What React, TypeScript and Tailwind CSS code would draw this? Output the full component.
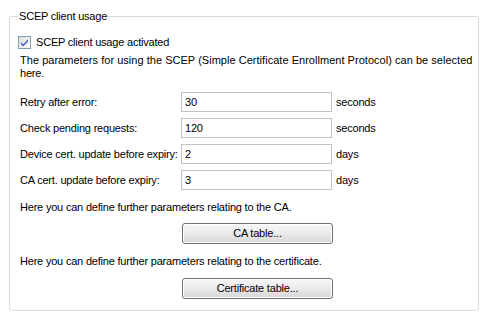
import React from 'react';

const font = { fontFamily: '"Liberation Sans", Arial, sans-serif' };

interface FieldRowProps {
  label: string;
  value: string;
  unit: string;
}

const FieldRow: React.FC<FieldRowProps> = ({ label, value, unit }) => (
  <div className="flex items-center h-[20px]">
    <span className="w-[161px] shrink-0 whitespace-nowrap">{label}</span>
    <input
      className="w-[151px] h-[20px] border border-[#c0c2c4] bg-white pl-[3px] text-[11px] text-black outline-none"
      defaultValue={value}
    />
    <span className="ml-[4px]">{unit}</span>
  </div>
);

const XpButton: React.FC<{ children: React.ReactNode }> = ({ children }) => (
  <button className="ml-[162px] w-[151px] h-[21px] rounded-[3px] border border-[#707070] bg-gradient-to-b from-[#f6f6f6] via-[#ebebeb] to-[#d6d6d6] shadow-[inset_0_0_0_1px_#ffffff] text-[11px] tracking-[-0.2px] text-black">
    {children}
  </button>
);

const CheckMark: React.FC = () => (
  <svg width="13" height="13" viewBox="0 0 13 13" className="shrink-0">
    <defs>
      <linearGradient id="cbfill" x1="0" y1="0" x2="1" y2="1">
        <stop offset="0" stopColor="#dcdcd7" />
        <stop offset="1" stopColor="#ffffff" />
      </linearGradient>
    </defs>
    <rect x="0.5" y="0.5" width="12" height="12" fill="url(#cbfill)" stroke="#7f9db9" />
    <path d="M3 6 L5 8.5 L10 3.5 L10 5.5 L5 10.5 L3 8 Z" fill="#3d55c4" />
  </svg>
);

export default function App() {
  return (
    <div className="w-[488px] h-[316px] bg-white text-[11px] leading-[13px] tracking-[-0.2px] text-black pt-[9px] overflow-hidden" style={font}>
      <fieldset className="ml-[9px] w-[470px] min-w-0 border border-[#d3dbe3] rounded-[3px] pl-[10px] pr-[8px] pt-[19px] pb-[11px]">
        <legend className="-ml-[2px] px-[1px] leading-[14px]">SCEP client usage</legend>
        <div className="-mt-[6px] -ml-[2px] flex items-center gap-[5px] h-[13px]">
          <CheckMark />
          <span>SCEP client usage activated</span>
        </div>
        <p className="mt-[5px] whitespace-nowrap">
          <span className="tracking-[0.03px]">
            The parameters for using the SCEP (Simple Certificate Enrollment Protocol) can be selected
          </span>
          <br />
          here.
        </p>
        <div className="mt-[12px] flex flex-col gap-[6px]">
          <FieldRow label="Retry after error:" value="30" unit="seconds" />
          <FieldRow label="Check pending requests:" value="120" unit="seconds" />
          <FieldRow label="Device cert. update before expiry:" value="2" unit="days" />
          <FieldRow label="CA cert. update before expiry:" value="3" unit="days" />
        </div>
        <p className="mt-[11px]">Here you can define further parameters relating to the CA.</p>
        <div className="mt-[9px]">
          <XpButton>CA table...</XpButton>
        </div>
        <p className="mt-[11px]">Here you can define further parameters relating to the certificate.</p>
        <div className="mt-[10px]">
          <XpButton>Certificate table...</XpButton>
        </div>
      </fieldset>
    </div>
  );
}
